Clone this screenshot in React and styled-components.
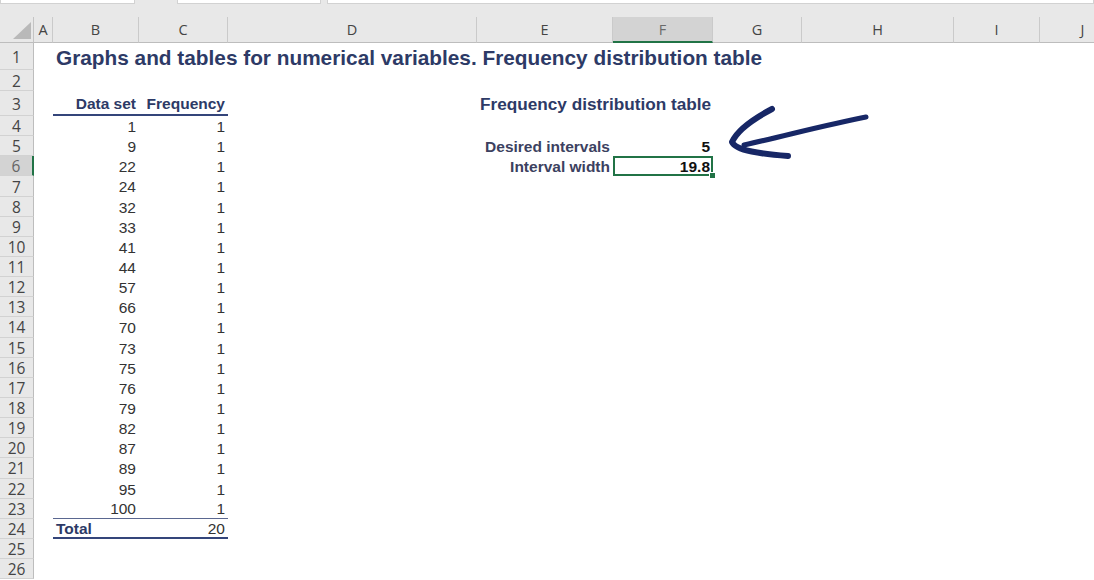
import React from "react";
import styled, { createGlobalStyle, css } from "styled-components";

const Global = createGlobalStyle`
  html, body { margin: 0; padding: 0; background: #ffffff; }
  body {
    width: 1094px;
    height: 580px;
    overflow: hidden;
    font-family: "Liberation Sans", Arial, sans-serif;
  }
`;

const COLUMNS = [
  { id: "A", w: 19 },
  { id: "B", w: 86 },
  { id: "C", w: 89 },
  { id: "D", w: 249 },
  { id: "E", w: 136 },
  { id: "F", w: 100 },
  { id: "G", w: 89 },
  { id: "H", w: 152 },
  { id: "I", w: 86 },
  { id: "J", w: 86 },
];

const ROW_HEIGHTS = [27, 21, 25, ...Array(23).fill(20.15)];

const NAVY = "#2d3a66";

const Page = styled.div`
  position: relative;
  width: 1094px;
  height: 580px;
  overflow: hidden;
  background: #ffffff;
  display: flex;
  flex-direction: column;
`;

const TabStrip = styled.div`
  height: 17px;
  flex: none;
  background: #e8e8e8;
  display: flex;
  align-items: flex-start;
`;

const Tab = styled.div`
  height: 3px;
  background: #ffffff;
  border: 1px solid #d2d2d2;
  border-top: none;
  width: ${(p) => (p.$w ? `${p.$w}px` : "auto")};
  flex: ${(p) => (p.$w ? "none" : "1")};
  margin-left: ${(p) => p.$gap || 0}px;
`;

const Sheet = styled.div`
  display: grid;
  grid-template-columns: 34px ${COLUMNS.map((c) => `${c.w}px`).join(" ")};
  grid-template-rows: 26px ${ROW_HEIGHTS.map((h) => `${h}px`).join(" ")};
`;

const Corner = styled.div`
  background: #e8e8e8;
  border-right: 1px solid #c4c4c4;
  border-bottom: 1px solid #bdbdbd;
  box-sizing: border-box;
  display: flex;
  justify-content: flex-end;
  align-items: flex-end;
  padding: 0 2px 3px 0;
`;

const SelectAll = styled.div`
  width: 0;
  height: 0;
  border-style: solid;
  border-width: 0 0 17px 18px;
  border-color: transparent transparent #b9b9b9 transparent;
`;

const ColHeader = styled.div`
  box-sizing: border-box;
  background: ${(p) => (p.$active ? "#d3d3d3" : "#e8e8e8")};
  border-right: 1px solid #cacaca;
  border-bottom: ${(p) => (p.$active ? "2px solid #217346" : "1px solid #bdbdbd")};
  display: flex;
  align-items: center;
  justify-content: center;
  font-family: "Open Sans", "Noto Sans", sans-serif;
  font-size: 14.5px;
  color: ${(p) => (p.$active ? "#6a6a6a" : "#444444")};
  padding-top: ${(p) => (p.$active ? "1px" : "0")};
`;

const RowHeader = styled.div`
  box-sizing: border-box;
  background: ${(p) => (p.$active ? "#d3d3d3" : "#e8e8e8")};
  border-bottom: 1px solid #d2d2d2;
  border-right: ${(p) => (p.$active ? "2px solid #217346" : "1px solid #bdbdbd")};
  display: flex;
  align-items: center;
  justify-content: center;
  font-family: "Open Sans", "Noto Sans", sans-serif;
  font-size: 15.5px;
  color: ${(p) => (p.$active ? "#666666" : "#444444")};
  padding-top: 1px;
`;

const ruleStyles = {
  thick: css`border-bottom: 2px solid #34457a;`,
  thin: css`border-bottom: 1px solid #5a6790;`,
};

const Cell = styled.div`
  position: relative;
  box-sizing: border-box;
  display: flex;
  align-items: center;
  justify-content: ${(p) => (p.$align === "left" ? "flex-start" : "flex-end")};
  padding: 2px 3px 0;
  white-space: nowrap;
  font-size: ${(p) => p.$size || 15.5}px;
  font-weight: ${(p) => (p.$bold ? 700 : 400)};
  color: ${(p) => p.$color || "#333333"};
  ${(p) => p.$rule && ruleStyles[p.$rule]}
  ${(p) =>
    p.$selected &&
    css`
      outline: 2px solid #217346;
      outline-offset: -2px;
      &::after {
        content: "";
        position: absolute;
        right: -3px;
        bottom: -3px;
        width: 5px;
        height: 5px;
        background: #217346;
        border: 1px solid #ffffff;
      }
    `}
`;

const Arrow = styled.svg`
  position: absolute;
  left: 0;
  top: 0;
  pointer-events: none;
`;

const dataSet = [1, 9, 22, 24, 32, 33, 41, 44, 57, 66, 70, 73, 75, 76, 79, 82, 87, 89, 95, 100];

const cells = {};
const put = (ref, props) => {
  cells[ref] = props;
};

put("B1", {
  text: "Graphs and tables for numerical variables. Frequency distribution table",
  align: "left",
  bold: true,
  size: 20.8,
  color: NAVY,
});
put("B3", { text: "Data set", bold: true, color: NAVY, rule: "thick" });
put("C3", { text: "Frequency", bold: true, color: NAVY, rule: "thick" });
dataSet.forEach((v, i) => {
  const r = 4 + i;
  const last = r === 23;
  put(`B${r}`, { text: String(v), rule: last ? "thin" : undefined });
  put(`C${r}`, { text: "1", rule: last ? "thin" : undefined });
});
put("B24", { text: "Total", bold: true, align: "left", color: NAVY, rule: "thick" });
put("C24", { text: "20", rule: "thick" });
put("E3", {
  text: "Frequency distribution table",
  align: "left",
  bold: true,
  size: 17.2,
  color: NAVY,
});
put("E5", { text: "Desired intervals", bold: true, color: "#3c4160" });
put("F5", { text: "5", bold: true, color: "#111111" });
put("E6", { text: "Interval width", bold: true, color: "#3c4160" });
put("F6", { text: "19.8", bold: true, color: "#111111", selected: true });

export default function App() {
  return (
    <>
      <Global />
      <Page>
        <TabStrip>
          <Tab $w={133} />
          <Tab $w={142} $gap={42} />
          <Tab $gap={6} />
        </TabStrip>
        <Sheet>
          <Corner>
            <SelectAll />
          </Corner>
          {COLUMNS.map((c) => (
            <ColHeader key={c.id} $active={c.id === "F"}>
              {c.id}
            </ColHeader>
          ))}
          {ROW_HEIGHTS.map((_, i) => {
            const r = i + 1;
            return (
              <React.Fragment key={r}>
                <RowHeader $active={r === 6}>{r}</RowHeader>
                {COLUMNS.map((c) => {
                  const d = cells[`${c.id}${r}`];
                  if (!d) return <Cell key={c.id} />;
                  return (
                    <Cell
                      key={c.id}
                      $align={d.align}
                      $bold={d.bold}
                      $size={d.size}
                      $color={d.color}
                      $rule={d.rule}
                      $selected={d.selected}
                    >
                      {d.text}
                    </Cell>
                  );
                })}
              </React.Fragment>
            );
          })}
        </Sheet>
        <Arrow width="1094" height="580" viewBox="0 0 1094 580">
          <g fill="none" stroke="#172766" strokeLinecap="round" strokeLinejoin="round">
            <path d="M 866 117 C 830 124 792 134 744 145" strokeWidth="5" />
            <path d="M 772 109 C 753 119 737 131 732 142 C 736 151 762 154 788 156" strokeWidth="6" />
          </g>
        </Arrow>
      </Page>
    </>
  );
}
